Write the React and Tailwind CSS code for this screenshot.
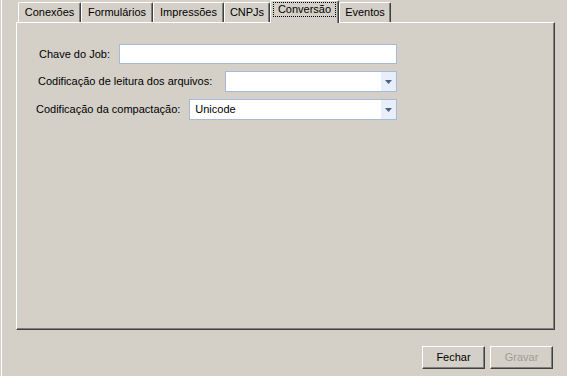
import React from 'react';

const tabs = [
  { label: 'Conexões', w: 'w-[63px]' },
  { label: 'Formulários', w: 'w-[72px]' },
  { label: 'Impressões', w: 'w-[71px]' },
  { label: 'CNPJs', w: 'w-[46px]' },
  { label: 'Conversão', w: 'w-[69px]', active: true },
  { label: 'Eventos', w: 'w-[52px]' },
];

const Arrow = () => (
  <div className="w-[15px] h-full bg-[#e8eefa] flex items-center justify-center">
    <svg width="7" height="4" viewBox="0 0 7 4">
      <path d="M0 0h7L3.5 4z" fill="#4d6185" />
    </svg>
  </div>
);

const Combo = ({ value }) => (
  <div className="flex-1 h-[21px] bg-white border border-[#a5b9d8] flex items-stretch">
    <div className="flex-1 flex items-center pl-[5px] text-black">{value}</div>
    <Arrow />
  </div>
);

const Button = ({ children, disabled }) => (
  <button
    className={`w-[63px] h-[23px] bg-[#d4d0c8] border-t border-l border-white border-r border-b border-r-[#404040] border-b-[#404040] shadow-[inset_-1px_-1px_0_#808080] flex items-center justify-center ${
      disabled ? 'text-[#a09c94]' : 'text-black'
    }`}
  >
    {children}
  </button>
);

export default function App() {
  return (
    <div className="w-[567px] h-[376px] bg-[#d4d0c8] pl-px font-['Liberation_Sans',Arial,sans-serif] text-[11px] text-black">
      <div className="h-full border-l border-white pl-[14px] pr-[12px] flex flex-col">
        {/* tab strip */}
        <div className="h-[22px] flex items-end pl-[2px] relative z-10">
          {tabs.map((t) =>
            t.active ? (
              <div
                key={t.label}
                className={`${t.w} h-[23px] -mb-px bg-[#d4d0c8] border-l border-t border-white border-r border-r-[#404040] shadow-[inset_-1px_0_0_#808080] rounded-t-[2px] flex items-start justify-center pt-[2px]`}
              >
                <span className="px-[4px] leading-[13px] outline-1 outline-dotted outline-black">{t.label}</span>
              </div>
            ) : (
              <div
                key={t.label}
                className={`${t.w} h-[20px] bg-[#d4d0c8] border-l border-t border-white border-r border-r-[#404040] shadow-[inset_-1px_0_0_#808080] rounded-t-[2px] flex items-center justify-center`}
              >
                {t.label}
              </div>
            )
          )}
        </div>

        {/* tab page */}
        <div className="h-[308px] border-l border-t border-white border-r border-b border-r-[#404040] border-b-[#404040] shadow-[inset_-1px_-1px_0_#808080] pt-[21px] pl-[21px]">
          <div className="w-[359px] flex flex-col gap-[7px]">
            <div className="flex items-center gap-[9px]">
              <span className="pl-px">Chave do Job:</span>
              <div className="flex-1 h-[20px] bg-white border border-[#a5b9d8]" />
            </div>
            <div className="flex items-center gap-[13px]">
              <span>Codificação de leitura dos arquivos:</span>
              <Combo value="" />
            </div>
            <div className="flex items-center gap-[9px] -ml-[2px]">
              <span>Codificação da compactação:</span>
              <Combo value="Unicode" />
            </div>
          </div>
        </div>

        {/* buttons */}
        <div className="flex justify-end gap-[5px] mt-[16px] pr-[2px]">
          <Button>Fechar</Button>
          <Button disabled>Gravar</Button>
        </div>
      </div>
    </div>
  );
}
